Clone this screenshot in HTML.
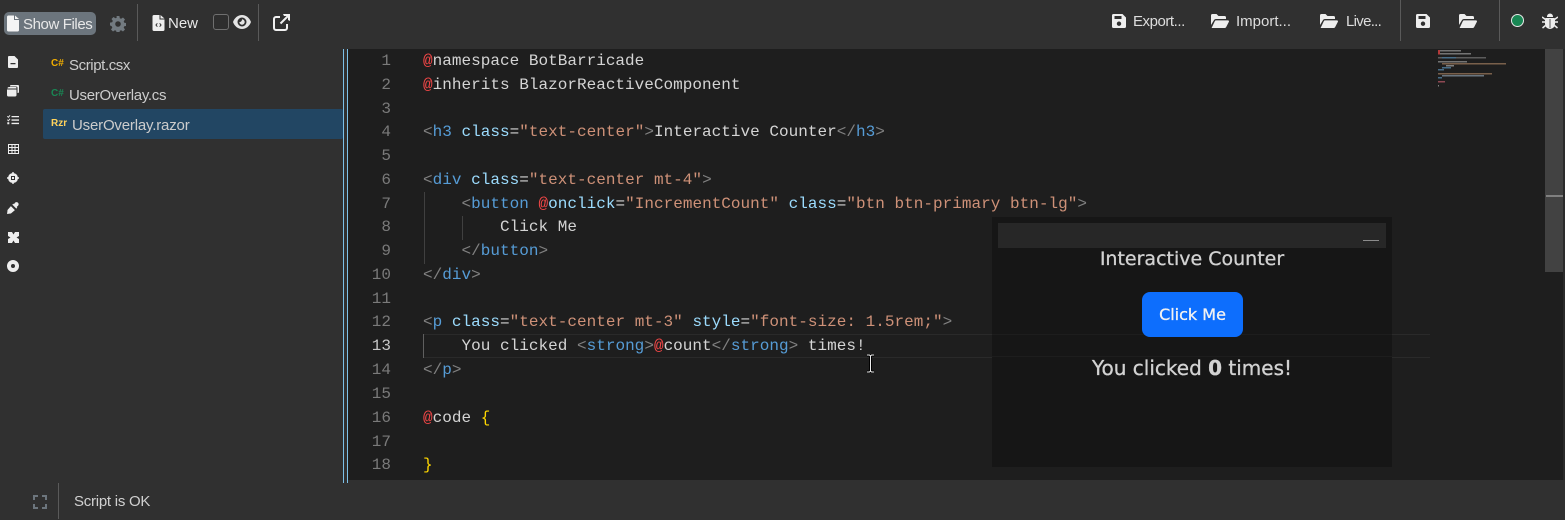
<!DOCTYPE html>
<html><head><meta charset="utf-8"><style>
html,body{margin:0;padding:0;width:1565px;height:520px;overflow:hidden;background:#303030}
body{position:relative;font-family:"Liberation Sans",sans-serif;color:#ddd}
.a{position:absolute}
.t{position:absolute;white-space:nowrap;font-size:15px;line-height:20px}
.sep{position:absolute;width:1px;background:#5a5a5a}
#ed{position:absolute;left:348px;top:49px;width:1217px;height:431px;background:#1e1e1e;overflow:hidden}
.l{position:absolute;left:75px;margin-top:1px;height:24px;white-space:pre;font:16px/24px "Liberation Mono",monospace;letter-spacing:.02px;color:#d4d4d4}
.n{position:absolute;left:0;margin-top:1px;width:43px;text-align:right;font:16px/24px "Liberation Mono",monospace;color:#7a7a7a}
.g{color:#808080}.b{color:#569cd6}.c{color:#9cdcfe}.s{color:#ce9178}.r{color:#f44747}.y{color:#ffd700}
.i{position:absolute;fill:#eee}
.f{position:absolute;font-size:15px;letter-spacing:-.25px;line-height:20px;color:#ccc;white-space:nowrap}
.k{position:absolute;font-size:10px;font-weight:bold;line-height:12px}
.o{position:absolute;left:992px;width:400px;text-align:center;white-space:nowrap;font-family:"DejaVu Sans",sans-serif;color:#d2d2d2;-webkit-text-stroke:.3px #d2d2d2}
</style></head><body>

<div class="a" style="left:4px;top:12px;width:92px;height:23px;background:#6c757d;border-radius:5px"></div>
<svg class="i" style="left:7px;top:15px" width="12" height="17" viewBox="0 0 12 16"><path d="M1.500 0H7v4.500h5V14.500a1.500 1.500 0 0 1-1.500 1.500h-9A1.500 1.500 0 0 1 0 14.500V1.500A1.500 1.500 0 0 1 1.500 0zM8 0l4 3.500H8z" fill="#f4f4f4"/></svg>
<div class="t" style="left:23px;top:15px;color:#e8e8e8;letter-spacing:-.4px">Show Files</div>
<svg class="a" style="left:110px;top:16px" width="16" height="16" viewBox="0 0 16 16"><path fill="#727a80" d="M6.600 0h2.800l.4 2.200 1.300.6 1.900-1.300 2 2-1.300 1.900.6 1.300 2.200.4v2.800l-2.200.4-.6 1.300 1.300 1.900-2 2-1.900-1.300-1.300.6-.4 2.200H6.600l-.4-2.200-1.300-.6-1.900 1.300-2-2 1.300-1.900-.6-1.300L0 9.400V6.600l2.200-.4.600-1.300-1.300-1.900 2-2 1.900 1.300 1.300-.6zM8 5.200a2.800 2.800 0 1 0 0 5.600 2.800 2.800 0 0 0 0-5.600z" fill-rule="evenodd"/></svg>
<div class="sep" style="left:137px;top:4px;height:37px"></div>
<svg class="a" style="left:152px;top:15px" width="13" height="16" viewBox="0 0 12 16"><path fill-rule="evenodd" fill="#eee" d="M1.500 0H7v4.500h5V14.500a1.500 1.500 0 0 1-1.500 1.500h-9A1.500 1.500 0 0 1 0 14.500V1.500A1.500 1.500 0 0 1 1.500 0zM8 0l4 3.500H8zM4.500 8 2.800 10l1.700 2 .7-.6L4.100 10l1.100-1.400zM7.500 8l-.7.600L7.900 10l-1.100 1.400.7.600 1.700-2z"/></svg>
<div class="t" style="left:168px;top:14px;color:#e8e8e8">New</div>
<div class="a" style="left:213px;top:14px;width:14px;height:14px;border:1px solid #6f6f6f;border-radius:3px;background:#2e2e2e"></div>
<svg class="a" style="left:233px;top:15px" width="18" height="14" viewBox="0 0 18 14"><path fill-rule="evenodd" fill="#e4e4e4" d="M9 0c4 0 7.500 2.800 9 7-1.500 4.200-5 7-9 7S1.500 11.200 0 7c1.500-4.200 5-7 9-7zm0 2.500a4.500 4.500 0 1 0 0 9 4.500 4.500 0 0 0 0-9zm0 1.800A2.700 2.700 0 1 1 6.300 7c.8.500 2.700-.5 2.700-2.700z"/></svg>
<div class="sep" style="left:258px;top:4px;height:37px"></div>
<svg class="a" style="left:273px;top:14px" width="17" height="17" viewBox="0 0 17 17"><path fill="none" stroke="#f0f0f0" stroke-width="2" d="M7 3H3a2 2 0 0 0-2 2v9a2 2 0 0 0 2 2h9a2 2 0 0 0 2-2v-4M7.500 9.500 15 2"/><path fill="#f0f0f0" d="M10 0h7v7l-2-1V2h-4z"/></svg>

<svg class="a" style="left:1112px;top:14px" width="14" height="14" viewBox="0 0 14 14"><path fill-rule="evenodd" fill="#eee" d="M1.500 0H10.500L14 3.500V12.500A1.500 1.500 0 0 1 12.500 14h-11A1.500 1.500 0 0 1 0 12.500v-11A1.500 1.500 0 0 1 1.500 0zM2.500 2v3h7V2zM7 7.500a2.200 2.200 0 1 0 0 4.400 2.200 2.200 0 0 0 0-4.400z"/></svg>
<div class="t" style="left:1133px;top:12px;letter-spacing:-.45px">Export...</div>
<svg class="a" style="left:1211px;top:14px" width="18" height="14" viewBox="0 0 18 14"><path fill="#eee" d="M0 11V1.500A1.500 1.500 0 0 1 1.500 0h4l2 2h6A1.500 1.500 0 0 1 15 3.500V5H5C4 5 3.300 5.500 2.900 6.300zM.6 14 3.800 7.200C4 6.700 4.500 6.400 5 6.400h12c.7 0 1.200.7.900 1.400L15.200 13c-.3.600-.8 1-1.500 1z"/></svg>
<div class="t" style="left:1236px;top:12px">Import...</div>
<svg class="a" style="left:1320px;top:14px" width="18" height="14" viewBox="0 0 18 14"><path fill="#eee" d="M0 11V1.500A1.500 1.500 0 0 1 1.500 0h4l2 2h6A1.500 1.500 0 0 1 15 3.500V5H5C4 5 3.300 5.500 2.900 6.300zM.6 14 3.800 7.200C4 6.700 4.500 6.400 5 6.400h12c.7 0 1.200.7.900 1.400L15.200 13c-.3.600-.8 1-1.500 1z"/></svg>
<div class="t" style="left:1346px;top:12px;letter-spacing:-.7px">Live...</div>
<div class="sep" style="left:1400px;top:0;height:41px"></div>
<svg class="a" style="left:1416px;top:14px" width="14" height="14" viewBox="0 0 14 14"><path fill-rule="evenodd" fill="#eee" d="M1.500 0H10.500L14 3.500V12.500A1.500 1.500 0 0 1 12.500 14h-11A1.500 1.500 0 0 1 0 12.500v-11A1.500 1.500 0 0 1 1.500 0zM2.500 2v3h7V2zM7 7.500a2.200 2.200 0 1 0 0 4.400 2.200 2.200 0 0 0 0-4.400z"/></svg>
<svg class="a" style="left:1459px;top:14px" width="18" height="14" viewBox="0 0 18 14"><path fill="#eee" d="M0 11V1.500A1.500 1.500 0 0 1 1.500 0h4l2 2h6A1.500 1.500 0 0 1 15 3.500V5H5C4 5 3.300 5.500 2.900 6.300zM.6 14 3.800 7.200C4 6.700 4.500 6.400 5 6.400h12c.7 0 1.200.7.900 1.400L15.200 13c-.3.600-.8 1-1.500 1z"/></svg>
<div class="sep" style="left:1499px;top:0;height:41px"></div>
<div class="a" style="left:1511px;top:14px;width:11px;height:11px;border:1px solid #e8e8e8;border-radius:50%;background:#198754"></div>
<svg class="a" style="left:1542px;top:13px" width="16" height="16" viewBox="0 0 16 16"><path fill="#eee" d="M5 3.500a3 3 0 0 1 6 0v.5H5zM4 5h8a1 1 0 0 1 1 1v5a5 5 0 0 1-10 0V6a1 1 0 0 1 1-1z"/><path fill="none" stroke="#eee" stroke-width="1.500" d="M0 4l3.500 2.500M16 4l-3.500 2.500M0 9h3M16 9h-3M.5 15l3-2.500M15.500 15l-3-2.500"/><path fill="#303030" d="M7.600 6h.8v9h-.8z"/></svg>

<svg class="i" style="left:8px;top:56px" width="10" height="12" viewBox="0 0 10 12"><path fill-rule="evenodd" d="M1 0h5.500L10 3.500V11a1 1 0 0 1-1 1H1a1 1 0 0 1-1-1V1a1 1 0 0 1 1-1zM2.500 7v1.200h5V7z"/></svg>
<svg class="i" style="left:7px;top:85px" width="12" height="12" viewBox="0 0 12 12"><path d="M4 0h7a1 1 0 0 1 1 1v6a1 1 0 0 1-1 1h-.5V3A1.500 1.500 0 0 0 9 1.500H3V1a1 1 0 0 1 1-1z"/><path d="M2 2.500h7A1 1 0 0 1 9.500 3.500v.5H.5A1.500 1.500 0 0 1 2 2.500zM.3 5h9.200v5.500a1.500 1.500 0 0 1-1.500 1.500H1.500A1.500 1.500 0 0 1 0 10.500V5z" transform="translate(0 -.5)"/></svg>
<svg class="i" style="left:7px;top:115px" width="12" height="10" viewBox="0 0 12 10"><path d="M4.500 1H12v1.300H4.500zM4.500 4.400H12v1.300H4.500zM4.500 7.800H12v1.300H4.500zM0 1.500l.8-.6.600.7L2.700 0l.7.600-2 2.400zM0 5l.8-.6.600.7 1.300-1.600.7.600-2 2.400zM.3 7.300h2v2h-2z"/></svg>
<svg class="i" style="left:8px;top:144px" width="11" height="10" viewBox="0 0 11 10"><path fill-rule="evenodd" d="M0 0h11v10H0zM1 1v2h2.500V1zM4.500 1v2h2V1zM7.500 1v2H10V1zM1 4v2h2.500V4zM4.500 4v2h2V4zM7.500 4v2H10V4zM1 7v2h2.500V7zM4.500 7v2h2V7zM7.500 7v2H10V7z"/></svg>
<svg class="i" style="left:7px;top:172px" width="12" height="12" viewBox="0 0 12 12"><path fill-rule="evenodd" d="M5.300 0h1.400v1.100a5 5 0 0 1 4.200 4.200H12v1.400h-1.100a5 5 0 0 1-4.200 4.200V12H5.300v-1.100a5 5 0 0 1-4.200-4.200H0V5.300h1.100a5 5 0 0 1 4.200-4.200zM4 4v4h4V4zM5 5h2v2H5z"/></svg>
<svg class="i" style="left:7px;top:202px" width="12" height="12" viewBox="0 0 12 12"><path d="M8 .8a2 2 0 0 1 3 3L9.700 5l.6.600-1 1-4-4 1-1 .6.600zM3.900 4.100l4 4-4 3.400-2.200.2L.500 12 0 11.500l.3-1.200.200-2.300z"/></svg>
<svg class="i" style="left:8px;top:232px" width="11" height="11" viewBox="0 0 11 11"><path fill-rule="evenodd" d="M0 0h11v11H0zM4 0 5.500 2.500 7 0zM0 4l2.500 1.500L0 7zM11 4 8.500 5.500 11 7zM4 11l1.500-2.500L7 11z"/></svg>
<svg class="i" style="left:7px;top:260px" width="12" height="12" viewBox="0 0 12 12"><path fill-rule="evenodd" d="M6 0a6 6 0 1 1 0 12A6 6 0 0 1 6 0zm0 4a2 2 0 1 0 0 4 2 2 0 0 0 0-4z"/></svg>

<div class="k" style="left:51px;top:58px;color:#f0ad00">C#</div><div class="f" style="left:69px;top:56px;letter-spacing:-.4px">Script.csx</div>
<div class="k" style="left:51px;top:88px;color:#198754">C#</div><div class="f" style="left:69px;top:86px;letter-spacing:-.3px">UserOverlay.cs</div>
<div class="a" style="left:43px;top:109px;width:300px;height:30px;background:#224663;border-radius:2px"></div>
<div class="k" style="left:51px;top:118px;color:#ffd35c">Rzr</div><div class="f" style="left:72px;top:116px;letter-spacing:-.18px">UserOverlay.razor</div>

<div class="a" style="left:343px;top:49px;width:1px;height:434px;background:#7cc0e8"></div>
<div class="a" style="left:347px;top:49px;width:1px;height:434px;background:#7cc0e8"></div>

<div id="ed">
<div class="a" style="left:75px;top:285px;width:1007px;height:22px;border:1px solid #2a2a2a;border-left:0;border-right:0"></div>
<div class="a" style="left:76px;top:143px;width:1px;height:72px;background:#404040"></div>
<div class="a" style="left:114px;top:167px;width:1px;height:24px;background:#404040"></div>
<div class="a" style="left:75px;top:285px;width:1px;height:24px;background:#5f5f5f"></div>

<div class="n" style="top:-1px">1</div><div class="l" style="top:-1px"><span class="r">@</span>namespace BotBarricade</div>
<div class="n" style="top:23px">2</div><div class="l" style="top:23px"><span class="r">@</span>inherits BlazorReactiveComponent</div>
<div class="n" style="top:47px">3</div>
<div class="n" style="top:70px">4</div><div class="l" style="top:70px"><span class="g">&lt;</span><span class="b">h3</span> <span class="c">class</span>=<span class="s">"text-center"</span><span class="g">&gt;</span>Interactive Counter<span class="g">&lt;/</span><span class="b">h3</span><span class="g">&gt;</span></div>
<div class="n" style="top:94px">5</div>
<div class="n" style="top:118px">6</div><div class="l" style="top:118px"><span class="g">&lt;</span><span class="b">div</span> <span class="c">class</span>=<span class="s">"text-center mt-4"</span><span class="g">&gt;</span></div>
<div class="n" style="top:142px">7</div><div class="l" style="top:142px">    <span class="g">&lt;</span><span class="b">button</span> <span class="r">@</span><span class="c">onclick</span>=<span class="s">"IncrementCount"</span> <span class="c">class</span>=<span class="s">"btn btn-primary btn-lg"</span><span class="g">&gt;</span></div>
<div class="n" style="top:165px">8</div><div class="l" style="top:165px">        Click Me</div>
<div class="n" style="top:189px">9</div><div class="l" style="top:189px">    <span class="g">&lt;/</span><span class="b">button</span><span class="g">&gt;</span></div>
<div class="n" style="top:213px">10</div><div class="l" style="top:213px"><span class="g">&lt;/</span><span class="b">div</span><span class="g">&gt;</span></div>
<div class="n" style="top:237px">11</div>
<div class="n" style="top:260px">12</div><div class="l" style="top:260px"><span class="g">&lt;</span><span class="b">p</span> <span class="c">class</span>=<span class="s">"text-center mt-3"</span> <span class="c">style</span>=<span class="s">"font-size: 1.5rem;"</span><span class="g">&gt;</span></div>
<div class="n" style="top:284px;color:#c6c6c6">13</div><div class="l" style="top:284px">    You clicked <span class="g">&lt;</span><span class="b">strong</span><span class="g">&gt;</span><span class="r">@</span>count<span class="g">&lt;/</span><span class="b">strong</span><span class="g">&gt;</span> times!</div>
<div class="n" style="top:308px">14</div><div class="l" style="top:308px"><span class="g">&lt;/</span><span class="b">p</span><span class="g">&gt;</span></div>
<div class="n" style="top:332px">15</div>
<div class="n" style="top:356px">16</div><div class="l" style="top:356px"><span class="r">@</span>code <span class="y">{</span></div>
<div class="n" style="top:380px">17</div>
<div class="n" style="top:403px">18</div><div class="l" style="top:403px"><span class="y">}</span></div>
</div>

<svg class="a" style="left:1438px;top:49px" width="90" height="40" viewBox="0 0 90 40" opacity=".7">
<rect x="0" y="1" width="23" height="1.500" fill="#999"/><rect x="0" y="4" width="33" height="1.500" fill="#999"/><rect x="0" y="1" width="2" height="4.500" fill="#f44747"/>
<rect x="0" y="8" width="48" height="1.500" fill="#777"/><rect x="4" y="8" width="14" height="1.500" fill="#5a8fb5"/>
<rect x="0" y="12" width="29" height="1.500" fill="#999"/><rect x="4" y="14" width="64" height="1.500" fill="#a07c5e"/><rect x="8" y="16" width="8" height="1.500" fill="#aaa"/><rect x="4" y="18" width="9" height="1.500" fill="#5a8fb5"/><rect x="0" y="20" width="6" height="1.500" fill="#5a8fb5"/>
<rect x="0" y="24" width="54" height="1.500" fill="#a07c5e"/><rect x="4" y="26" width="42" height="1.500" fill="#8a9aaa"/><rect x="0" y="28" width="4" height="1.500" fill="#5a8fb5"/>
<rect x="0" y="32" width="7" height="1.500" fill="#c05a6a"/><rect x="0" y="36" width="1" height="1.500" fill="#aaa"/>
</svg>
<div class="a" style="left:1545px;top:49px;width:18px;height:223px;background:#424242"></div>
<div class="a" style="left:1546px;top:195px;width:17px;height:2px;background:#808080"></div>
<div class="a" style="left:1563px;top:49px;width:2px;height:431px;background:#2a2a2a"></div>

<div class="a" style="left:992px;top:217px;width:400px;height:250px;background:#161616"></div>
<div class="a" style="left:992px;top:334px;width:400px;height:23px;border:1px solid #1d1d1d;border-left:0;border-right:0;box-sizing:border-box"></div>
<div class="a" style="left:998px;top:223px;width:388px;height:25px;background:#272727"></div>
<div class="a" style="left:1363px;top:240px;width:16px;height:1px;background:#8c8c8c"></div>
<div class="o" style="top:247px;font-size:19px;line-height:24px">Interactive Counter</div>
<div class="a" style="left:1142px;top:292px;width:101px;height:45px;background:#0d6efd;border-radius:8px"></div>
<div class="a" style="left:1142px;top:292px;width:101px;text-align:center;font:16px/45px 'DejaVu Sans',sans-serif;color:#f2f2f2;-webkit-text-stroke:.3px #f2f2f2">Click Me</div>
<div class="o" style="top:355px;font-size:20px;line-height:26px">You clicked <b>0</b> times!</div>

<svg class="a" style="left:866px;top:354px" width="9" height="19" viewBox="0 0 9 19"><path fill="none" stroke="#000" stroke-width="3" d="M1 1h2.500L4.500 2l1-1H8M4.500 2v15M1 18h2.500l1-1 1 1H8"/><path fill="none" stroke="#eee" stroke-width="1" d="M1 1h2.500L4.500 2l1-1H8M4.500 2v15M1 18h2.500l1-1 1 1H8"/></svg>

<svg class="a" style="left:33px;top:495px" width="14" height="14" viewBox="0 0 14 14"><path fill="none" stroke="#6c757d" stroke-width="2" d="M1 5V1h4M9 1h4v4M13 9v4H9M5 13H1V9"/></svg>
<div class="sep" style="left:58px;top:483px;height:36px"></div>
<div class="t" style="left:74px;top:492px;color:#d0d0d0;letter-spacing:-.25px">Script is OK</div>
</body></html>
